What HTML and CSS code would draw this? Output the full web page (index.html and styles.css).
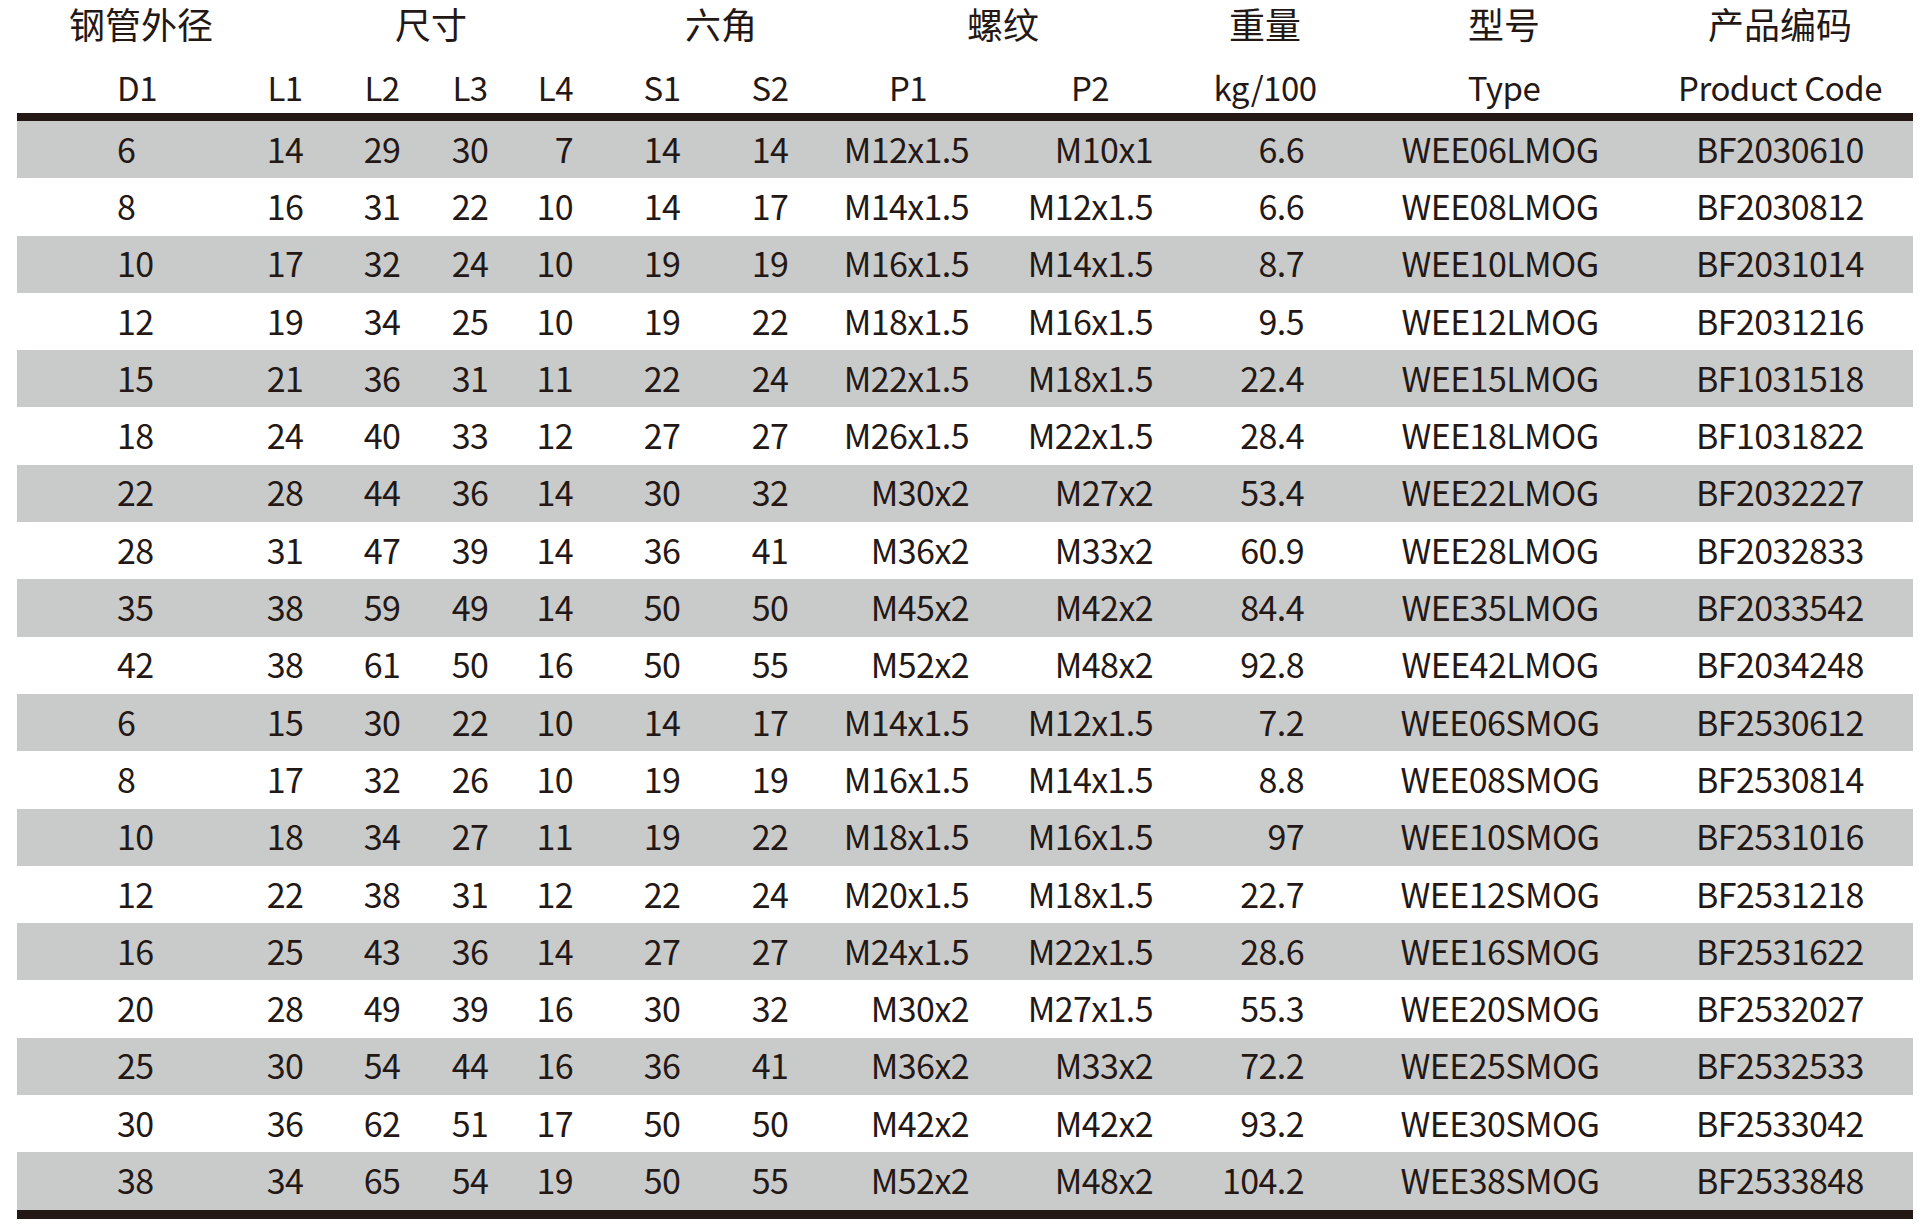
FILE: index.html
```html
<!DOCTYPE html>
<html lang="zh-CN">
<head>
<meta charset="utf-8">
<title>规格表</title>
<link rel="stylesheet" href="styles.css">
</head>
<body>
<div class="sheet">
  <div class="head head-cn">
    <div class="c g-d1">钢管外径</div>
    <div class="c g-size">尺寸</div>
    <div class="c g-hex">六角</div>
    <div class="c g-thread">螺纹</div>
    <div class="c g-wt">重量</div>
    <div class="c g-type">型号</div>
    <div class="c g-code">产品编码</div>
  </div>
  <div class="head head-en">
    <div class="c d1">D1</div>
    <div class="c">L1</div>
    <div class="c">L2</div>
    <div class="c">L3</div>
    <div class="c l4">L4</div>
    <div class="c">S1</div>
    <div class="c">S2</div>
    <div class="c">P1</div>
    <div class="c">P2</div>
    <div class="c">kg/100</div>
    <div class="c">Type</div>
    <div class="c">Product Code</div>
  </div>
  <div class="body" id="body">
    <div class="row"><div class="c d1">6</div><div class="c">14</div><div class="c">29</div><div class="c">30</div><div class="c l4">7</div><div class="c">14</div><div class="c">14</div><div class="c p1">M12x1.5</div><div class="c p2">M10x1</div><div class="c wt">6.6</div><div class="c type">WEE06LMOG</div><div class="c">BF2030610</div></div>
    <div class="row"><div class="c d1">8</div><div class="c">16</div><div class="c">31</div><div class="c">22</div><div class="c l4">10</div><div class="c">14</div><div class="c">17</div><div class="c p1">M14x1.5</div><div class="c p2">M12x1.5</div><div class="c wt">6.6</div><div class="c type">WEE08LMOG</div><div class="c">BF2030812</div></div>
    <div class="row"><div class="c d1">10</div><div class="c">17</div><div class="c">32</div><div class="c">24</div><div class="c l4">10</div><div class="c">19</div><div class="c">19</div><div class="c p1">M16x1.5</div><div class="c p2">M14x1.5</div><div class="c wt">8.7</div><div class="c type">WEE10LMOG</div><div class="c">BF2031014</div></div>
    <div class="row"><div class="c d1">12</div><div class="c">19</div><div class="c">34</div><div class="c">25</div><div class="c l4">10</div><div class="c">19</div><div class="c">22</div><div class="c p1">M18x1.5</div><div class="c p2">M16x1.5</div><div class="c wt">9.5</div><div class="c type">WEE12LMOG</div><div class="c">BF2031216</div></div>
    <div class="row"><div class="c d1">15</div><div class="c">21</div><div class="c">36</div><div class="c">31</div><div class="c l4">11</div><div class="c">22</div><div class="c">24</div><div class="c p1">M22x1.5</div><div class="c p2">M18x1.5</div><div class="c wt">22.4</div><div class="c type">WEE15LMOG</div><div class="c">BF1031518</div></div>
    <div class="row"><div class="c d1">18</div><div class="c">24</div><div class="c">40</div><div class="c">33</div><div class="c l4">12</div><div class="c">27</div><div class="c">27</div><div class="c p1">M26x1.5</div><div class="c p2">M22x1.5</div><div class="c wt">28.4</div><div class="c type">WEE18LMOG</div><div class="c">BF1031822</div></div>
    <div class="row"><div class="c d1">22</div><div class="c">28</div><div class="c">44</div><div class="c">36</div><div class="c l4">14</div><div class="c">30</div><div class="c">32</div><div class="c p1">M30x2</div><div class="c p2">M27x2</div><div class="c wt">53.4</div><div class="c type">WEE22LMOG</div><div class="c">BF2032227</div></div>
    <div class="row"><div class="c d1">28</div><div class="c">31</div><div class="c">47</div><div class="c">39</div><div class="c l4">14</div><div class="c">36</div><div class="c">41</div><div class="c p1">M36x2</div><div class="c p2">M33x2</div><div class="c wt">60.9</div><div class="c type">WEE28LMOG</div><div class="c">BF2032833</div></div>
    <div class="row"><div class="c d1">35</div><div class="c">38</div><div class="c">59</div><div class="c">49</div><div class="c l4">14</div><div class="c">50</div><div class="c">50</div><div class="c p1">M45x2</div><div class="c p2">M42x2</div><div class="c wt">84.4</div><div class="c type">WEE35LMOG</div><div class="c">BF2033542</div></div>
    <div class="row"><div class="c d1">42</div><div class="c">38</div><div class="c">61</div><div class="c">50</div><div class="c l4">16</div><div class="c">50</div><div class="c">55</div><div class="c p1">M52x2</div><div class="c p2">M48x2</div><div class="c wt">92.8</div><div class="c type">WEE42LMOG</div><div class="c">BF2034248</div></div>
    <div class="row"><div class="c d1">6</div><div class="c">15</div><div class="c">30</div><div class="c">22</div><div class="c l4">10</div><div class="c">14</div><div class="c">17</div><div class="c p1">M14x1.5</div><div class="c p2">M12x1.5</div><div class="c wt">7.2</div><div class="c type">WEE06SMOG</div><div class="c">BF2530612</div></div>
    <div class="row"><div class="c d1">8</div><div class="c">17</div><div class="c">32</div><div class="c">26</div><div class="c l4">10</div><div class="c">19</div><div class="c">19</div><div class="c p1">M16x1.5</div><div class="c p2">M14x1.5</div><div class="c wt">8.8</div><div class="c type">WEE08SMOG</div><div class="c">BF2530814</div></div>
    <div class="row"><div class="c d1">10</div><div class="c">18</div><div class="c">34</div><div class="c">27</div><div class="c l4">11</div><div class="c">19</div><div class="c">22</div><div class="c p1">M18x1.5</div><div class="c p2">M16x1.5</div><div class="c wt">97</div><div class="c type">WEE10SMOG</div><div class="c">BF2531016</div></div>
    <div class="row"><div class="c d1">12</div><div class="c">22</div><div class="c">38</div><div class="c">31</div><div class="c l4">12</div><div class="c">22</div><div class="c">24</div><div class="c p1">M20x1.5</div><div class="c p2">M18x1.5</div><div class="c wt">22.7</div><div class="c type">WEE12SMOG</div><div class="c">BF2531218</div></div>
    <div class="row"><div class="c d1">16</div><div class="c">25</div><div class="c">43</div><div class="c">36</div><div class="c l4">14</div><div class="c">27</div><div class="c">27</div><div class="c p1">M24x1.5</div><div class="c p2">M22x1.5</div><div class="c wt">28.6</div><div class="c type">WEE16SMOG</div><div class="c">BF2531622</div></div>
    <div class="row"><div class="c d1">20</div><div class="c">28</div><div class="c">49</div><div class="c">39</div><div class="c l4">16</div><div class="c">30</div><div class="c">32</div><div class="c p1">M30x2</div><div class="c p2">M27x1.5</div><div class="c wt">55.3</div><div class="c type">WEE20SMOG</div><div class="c">BF2532027</div></div>
    <div class="row"><div class="c d1">25</div><div class="c">30</div><div class="c">54</div><div class="c">44</div><div class="c l4">16</div><div class="c">36</div><div class="c">41</div><div class="c p1">M36x2</div><div class="c p2">M33x2</div><div class="c wt">72.2</div><div class="c type">WEE25SMOG</div><div class="c">BF2532533</div></div>
    <div class="row"><div class="c d1">30</div><div class="c">36</div><div class="c">62</div><div class="c">51</div><div class="c l4">17</div><div class="c">50</div><div class="c">50</div><div class="c p1">M42x2</div><div class="c p2">M42x2</div><div class="c wt">93.2</div><div class="c type">WEE30SMOG</div><div class="c">BF2533042</div></div>
    <div class="row"><div class="c d1">38</div><div class="c">34</div><div class="c">65</div><div class="c">54</div><div class="c l4">19</div><div class="c">50</div><div class="c">55</div><div class="c p1">M52x2</div><div class="c p2">M48x2</div><div class="c wt">104.2</div><div class="c type">WEE38SMOG</div><div class="c">BF2533848</div></div>
  </div>
</div>
</body>
</html>
```
FILE: styles.css
```css
html, body {
  margin: 0;
  padding: 0;
  background: #ffffff;
}

body {
  font-family: "Noto Sans CJK SC", "Noto Sans", sans-serif;
  color: #231815;
  font-weight: 400;
}

.sheet {
  width: 1896px;
  margin-left: 17px;
}

.head,
.row {
  display: grid;
  grid-template-columns: 236px 64px 130px 46px 132px 74px 142px 134px 230px 120px 358px 194px 36px;
}

.c {
  display: flex;
  align-items: center;
  justify-content: center;
  white-space: nowrap;
  box-sizing: border-box;
}

/* Chinese group header */
.head-cn {
  height: 46px;
  font-size: 36px;
}
.head-cn .c { height: 46px; line-height: 46px; }
.g-d1 { justify-content: flex-start; padding-left: 52px; }
.g-size { grid-column: 2 / 6; padding-right: 16px; }
.g-hex { grid-column: 6 / 8; padding-right: 24px; }
.g-thread { grid-column: 8 / 10; padding-right: 40px; }
.g-wt { grid-column: 10 / 11; }
.g-type { grid-column: 11 / 12; }
.g-code { grid-column: 12 / 13; }

/* English sub header */
.head-en {
  height: 67px;
  font-size: 33px;
  letter-spacing: -0.5px;
  border-bottom: 8px solid #231815;
}
.head-en .c { padding-top: 14px; line-height: 40px; }

/* body rows */
.body {
  border-bottom: 9px solid #231815;
}
.row {
  height: 57.3px;
  font-size: 34px;
  letter-spacing: -0.6px;
}
.row:nth-child(odd) {
  background: #c9caca;
}
.row .c { line-height: 40px; padding-bottom: 2px; }

.d1 { justify-content: flex-start; padding-left: 100px; }
.l4 { justify-content: flex-end; padding-right: 52px; }
.row .p1 { justify-content: flex-end; padding-right: 6px; }
.row .p2 { justify-content: flex-end; padding-right: 52px; }
.row .wt { justify-content: flex-end; padding-right: 21px; }
.row .type { padding-right: 8px; }
```
